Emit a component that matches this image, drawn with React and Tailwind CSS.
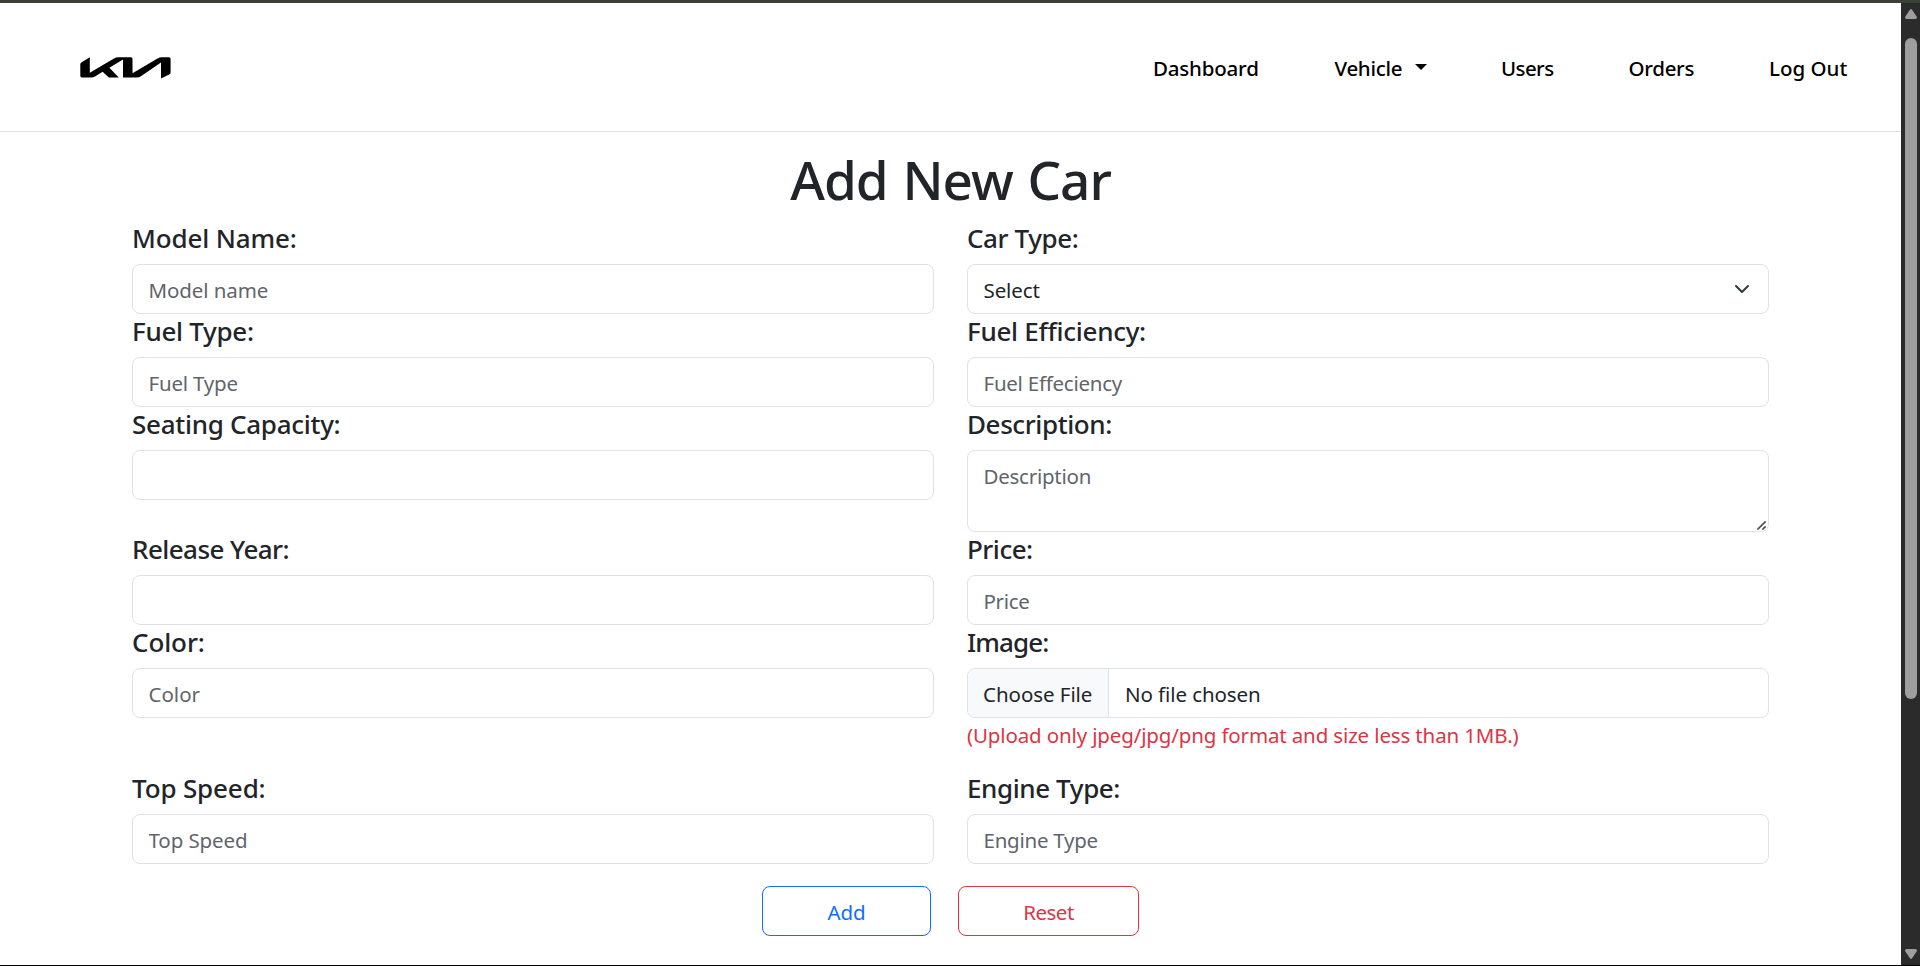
const control = "w-full h-[50px] rounded-[8px] border border-[#dee2e6] bg-white pl-[15.5px] pr-[18px] pt-[2px] text-[20.5px] leading-[46px] text-[#212529] outline-none placeholder:text-[#5f656b] placeholder:opacity-100";

function Logo() {
  return (
    <svg className="mt-[2px] h-[22px] w-[92px]" viewBox="0 0 92 22" aria-label="Kia">
      <path
        fill="#000"
        d="M9.8 .3 V15.8 L34 1.5 Q36 .3 38 .3 H51 Q52.5 .3 52.5 1.8 V16.3 L77.5 1.6 Q79.6 .3 82 .3 H89 Q90.6 .3 90.6 1.9 V15.5 Q90.6 16.7 89.6 17.3 L81 21.6 V5.6 L60.5 19.5 Q59 20.6 57 20.6 H43 V2.6 L29.4 10.8 L38.8 20.6 H28.9 L22.6 14.7 L15 19.6 Q13.4 20.6 11.5 20.6 H2.2 Q.3 20.6 .3 18.7 V7.5 Q.3 6.3 1.3 5.6 Z"
      />
    </svg>
  );
}

function Field({ label, labelClass = "", children }) {
  return (
    <div className="flex flex-col">
      <label className={`mb-[9px] block text-[26px] font-medium leading-[34px] ${labelClass}`}>{label}</label>
      {children}
    </div>
  );
}

function Scrollbar() {
  return (
    <div className="flex w-[19px] shrink-0 flex-col items-center bg-[#2b2b2b] pb-[6px] pt-[6px]">
      <svg className="h-[10px] w-[12px] shrink-0" viewBox="0 0 12 10">
        <path fill="#9e9e9e" d="M4.9.8 Q6-.6 7.1.8 L11.6 7.6 Q12.4 9.8 10.6 10 H1.4 Q-.4 9.8 .4 7.6 Z" />
      </svg>
      <div className="mt-[19px] h-[661px] w-[12px] shrink-0 rounded-full bg-[#9e9e9e]" />
      <svg className="mt-auto h-[10px] w-[12px] shrink-0" viewBox="0 0 12 10">
        <path fill="#9e9e9e" d="M4.9 9.2 Q6 10.6 7.1 9.2 L11.6 2.4 Q12.4 .2 10.6 0 H1.4 Q-.4 .2 .4 2.4 Z" />
      </svg>
    </div>
  );
}

export default function App() {
  return (
    <div className="flex h-[966px] w-full flex-col overflow-hidden border-b border-t-[3px] border-b-black border-t-[#3a3f37] bg-white font-['Noto_Sans',sans-serif] text-[#212529]">
      <div className="flex min-h-0 flex-1">
        <div className="min-w-0 flex-1">
          <header className="flex h-[129px] items-center justify-between border-b border-[#dee2e6] pl-[80px] pr-[52px]">
            <Logo />
            <nav className="flex gap-[74.5px] whitespace-nowrap pt-[2px] text-[20.5px] font-medium leading-8 text-black">
              <a className="w-[107px] tracking-[-0.2px]">Dashboard</a>
              <a className="flex w-[92px] items-center justify-between tracking-[-0.3px]">
                Vehicle
                <svg className="mb-[2px] h-[6px] w-[12px]" viewBox="0 0 12 6">
                  <path d="M0 0h12L6 6z" />
                </svg>
              </a>
              <a className="w-[53px] tracking-[-0.6px]">Users</a>
              <a className="w-[66px] tracking-[-0.3px]">Orders</a>
              <a className="w-[80px]">Log Out</a>
            </nav>
          </header>

          <main className="px-[132px] pt-[16px]">
            <h1 className="mb-[9px] text-center text-[53px] font-medium leading-[64px] tracking-[-1px] [word-spacing:2px]">Add New Car</h1>
            <form className="grid grid-cols-2 gap-x-[33px]">
              <Field label="Model Name:" labelClass="tracking-[-0.15px]">
                <input className={`${control} tracking-[-0.1px]`} placeholder="Model name" />
              </Field>
              <Field label="Car Type:" labelClass="tracking-[-0.4px]">
                <div className={`${control} flex items-center justify-between`}>
                  <span className="tracking-[-0.1px]">Select</span>
                  <svg className="mb-[2px] h-4 w-4" viewBox="0 0 16 16" fill="none" stroke="#343a40" strokeWidth="2" strokeLinecap="round" strokeLinejoin="round">
                    <path d="m2 5 6 6 6-6" />
                  </svg>
                </div>
              </Field>

              <Field label="Fuel Type:" labelClass="tracking-[-0.3px]">
                <input className={`${control} tracking-[-0.2px]`} placeholder="Fuel Type" />
              </Field>
              <Field label="Fuel Efficiency:" labelClass="tracking-[-0.28px]">
                <input className={`${control} tracking-[-0.25px]`} placeholder="Fuel Effeciency" />
              </Field>

              <Field label="Seating Capacity:" labelClass="tracking-[-0.28px]">
                <input className={control} />
              </Field>
              <Field label="Description:" labelClass="tracking-[-0.4px]">
                <div className="relative h-[82px]">
                  <textarea
                    className="block h-[82px] w-full resize-none rounded-[8px] border border-[#dee2e6] px-[15.5px] pt-[9px] text-[20.5px] leading-8 tracking-[-0.25px] outline-none placeholder:text-[#5f656b] placeholder:opacity-100"
                    placeholder="Description"
                  />
                  <svg className="absolute bottom-[2px] right-[3px] h-[9px] w-[9px]" viewBox="0 0 9 9" stroke="#505050" strokeWidth="1.6" fill="none">
                    <path d="M.4 8.6 8.6.4M5.4 8.6 8.6 5.4" />
                  </svg>
                </div>
              </Field>

              <Field label="Release Year:" labelClass="tracking-[-0.55px]">
                <input className={control} />
              </Field>
              <Field label="Price:" labelClass="tracking-[-0.5px]">
                <input className={`${control} tracking-[-0.3px]`} placeholder="Price" />
              </Field>

              <Field label="Color:" labelClass="tracking-[-0.1px]">
                <input className={control} placeholder="Color" />
              </Field>
              <Field label="Image:" labelClass="tracking-[-0.9px]">
                <div className="flex h-[50px] overflow-hidden rounded-[8px] border border-[#dee2e6] text-[20.5px] leading-[50px]">
                  <span className="w-[141px] border-r border-[#dee2e6] bg-[#f8f9fa] pl-[15px] tracking-[-0.05px]">Choose File</span>
                  <span className="pl-[16px] tracking-[-0.08px]">No file chosen</span>
                </div>
                <p className="mb-[20px] mt-[1px] text-[20.5px] leading-8 tracking-[-0.14px] text-[#dc3545]">
                  (Upload only jpeg/jpg/png format and size less than 1MB.)
                </p>
              </Field>

              <Field label="Top Speed:" labelClass="tracking-[-0.15px]">
                <input className={`${control} tracking-[-0.1px]`} placeholder="Top Speed" />
              </Field>
              <Field label="Engine Type:" labelClass="tracking-[-0.4px]">
                <input className={`${control} tracking-[-0.25px]`} placeholder="Engine Type" />
              </Field>
            </form>

            <div className="mt-[22px] flex justify-center gap-[27px] text-[20.5px] leading-[50px]">
              <button className="h-[50px] w-[169px] rounded-[8px] border border-[#0d6efd] tracking-[-0.1px] text-[#0d6efd]">Add</button>
              <button className="h-[50px] w-[181px] rounded-[8px] border border-[#dc3545] tracking-[-0.5px] text-[#dc3545]">Reset</button>
            </div>
          </main>
        </div>
        <Scrollbar />
      </div>
    </div>
  );
}
